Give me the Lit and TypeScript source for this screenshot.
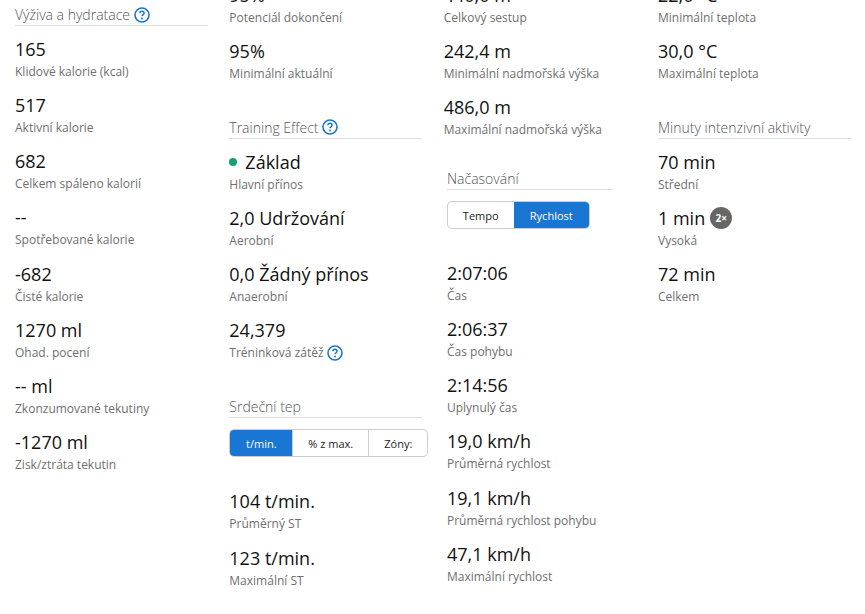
import { LitElement, html, css, nothing } from 'lit';
import { customElement } from 'lit/decorators.js';

const helpIcon = html`
  <svg class="help" viewBox="0 0 16 16" fill="none">
    <circle cx="8" cy="8" r="7" stroke="#1976d2" stroke-width="1.6" />
    <path d="M5.9 6.3a2.1 2.1 0 0 1 4.2 0c0 1.5-2.1 1.6-2.1 3" stroke="#1976d2" stroke-width="1.5" />
    <circle cx="8" cy="11.5" r="0.95" fill="#1976d2" />
  </svg>
`;

const stat = (value: unknown, label: unknown) => html`
  <div class="stat">
    <div class="value">${value}</div>
    <div class="label">${label}</div>
  </div>
`;

const heading = (text: string, help = false) => html`
  <h4 class="heading">${text}${help ? helpIcon : nothing}</h4>
`;

@customElement('app-root')
export class AppRoot extends LitElement {
  static styles = css`
    :host {
      display: block;
      height: 614px;
      overflow: hidden;
      background: #fff;
      font-family: 'Open Sans', sans-serif;
      color: #111;
    }

    .columns {
      display: grid;
      grid-template-columns: repeat(4, 193px);
      column-gap: 21.33px;
      padding-left: 15px;
      align-items: start;
    }

    .col-one {
      padding-top: 4px;
    }

    .col-rest {
      margin-top: -18.4px;
    }

    .heading {
      display: flex;
      align-items: center;
      gap: 4px;
      height: 21px;
      margin: 0 0 10px;
      border-bottom: 1px solid #dcdcdc;
      font-size: 14px;
      font-weight: 300;
      line-height: 21px;
      color: #555;
    }

    .help {
      width: 16px;
      height: 16px;
      flex: none;
    }

    .stat {
      height: 56.15px;
    }

    .value {
      display: flex;
      align-items: center;
      height: 26px;
      font-size: 18px;
      line-height: 26px;
    }

    .label {
      display: flex;
      align-items: center;
      gap: 3px;
      height: 18px;
      margin-top: 1px;
      font-size: 12px;
      line-height: 18px;
      color: #6f6f6f;
    }

    .group {
      margin-top: 23px;
    }

    .dot {
      width: 8px;
      height: 8px;
      margin-right: 8px;
      border-radius: 50%;
      background: #10a56f;
    }

    .badge {
      display: inline-flex;
      align-items: center;
      justify-content: center;
      width: 22px;
      height: 22px;
      margin-left: 5px;
      border-radius: 50%;
      background: #666;
      color: #fff;
      font-size: 10px;
      font-weight: 700;
    }

    .inset {
      margin: 18px 24px 0 3.33px;
    }

    .tabs {
      display: flex;
      height: 28px;
      margin: 11px 0 31px;
      border: 1px solid #ccc;
      border-radius: 5px;
      overflow: hidden;
      box-sizing: border-box;
    }

    .tab {
      display: flex;
      align-items: center;
      justify-content: center;
      border-left: 1px solid #ccc;
      font-size: 11px;
      font-weight: 400;
      color: #222;
    }

    .tab:first-child {
      border-left: 0;
    }

    .tab.on {
      background: #1976d2;
      color: #fff;
      border-left: 0;
    }

    .wide {
      width: 199px;
    }

    .narrow {
      width: 143px;
    }

    .w-59 {
      width: 59px;
    }

    .w-63 {
      width: 63px;
    }

    .w-66 {
      width: 66px;
    }

    .w-76 {
      width: 76px;
    }
  `;

  render() {
    return html`
      <div class="columns">
        <section class="col-one">
          ${heading('Výživa a hydratace', true)}
          ${stat('165', 'Klidové kalorie (kcal)')}
          ${stat('517', 'Aktivní kalorie')}
          ${stat('682', 'Celkem spáleno kalorií')}
          ${stat('--', 'Spotřebované kalorie')}
          ${stat('-682', 'Čisté kalorie')}
          ${stat('1270 ml', 'Ohad. pocení')}
          ${stat('-- ml', 'Zkonzumované tekutiny')}
          ${stat('-1270 ml', 'Zisk/ztráta tekutin')}
        </section>

        <section class="col-rest">
          ${stat('95%', 'Potenciál dokončení')}
          ${stat('95%', 'Minimální aktuální')}
          <div class="group">
            ${heading('Training Effect', true)}
            ${stat(html`<span class="dot"></span>Základ`, 'Hlavní přínos')}
            ${stat('2,0 Udržování', 'Aerobní')}
            ${stat('0,0 Žádný přínos', 'Anaerobní')}
            ${stat('24,379', html`Tréninková zátěž ${helpIcon}`)}
          </div>
          <div class="group">
            ${heading('Srdeční tep')}
            <div class="tabs wide">
              <div class="tab on w-63">t/min.</div>
              <div class="tab w-76">% z max.</div>
              <div class="tab w-59">Zóny:</div>
            </div>
            ${stat('104 t/min.', 'Průměrný ST')}
            ${stat('123 t/min.', 'Maximální ST')}
          </div>
        </section>

        <section class="col-rest">
          ${stat('440,0 m', 'Celkový sestup')}
          ${stat('242,4 m', 'Minimální nadmořská výška')}
          ${stat('486,0 m', 'Maximální nadmořská výška')}
          <div class="inset">
            ${heading('Načasování')}
            <div class="tabs narrow">
              <div class="tab w-66">Tempo</div>
              <div class="tab on w-76">Rychlost</div>
            </div>
            ${stat('2:07:06', 'Čas')}
            ${stat('2:06:37', 'Čas pohybu')}
            ${stat('2:14:56', 'Uplynulý čas')}
            ${stat('19,0 km/h', 'Průměrná rychlost')}
            ${stat('19,1 km/h', 'Průměrná rychlost pohybu')}
            ${stat('47,1 km/h', 'Maximální rychlost')}
          </div>
        </section>

        <section class="col-rest">
          ${stat('22,0 °C', 'Minimální teplota')}
          ${stat('30,0 °C', 'Maximální teplota')}
          <div class="group">
            ${heading('Minuty intenzivní aktivity')}
            ${stat('70 min', 'Střední')}
            ${stat(html`1 min<span class="badge">2×</span>`, 'Vysoká')}
            ${stat('72 min', 'Celkem')}
          </div>
        </section>
      </div>
    `;
  }
}
